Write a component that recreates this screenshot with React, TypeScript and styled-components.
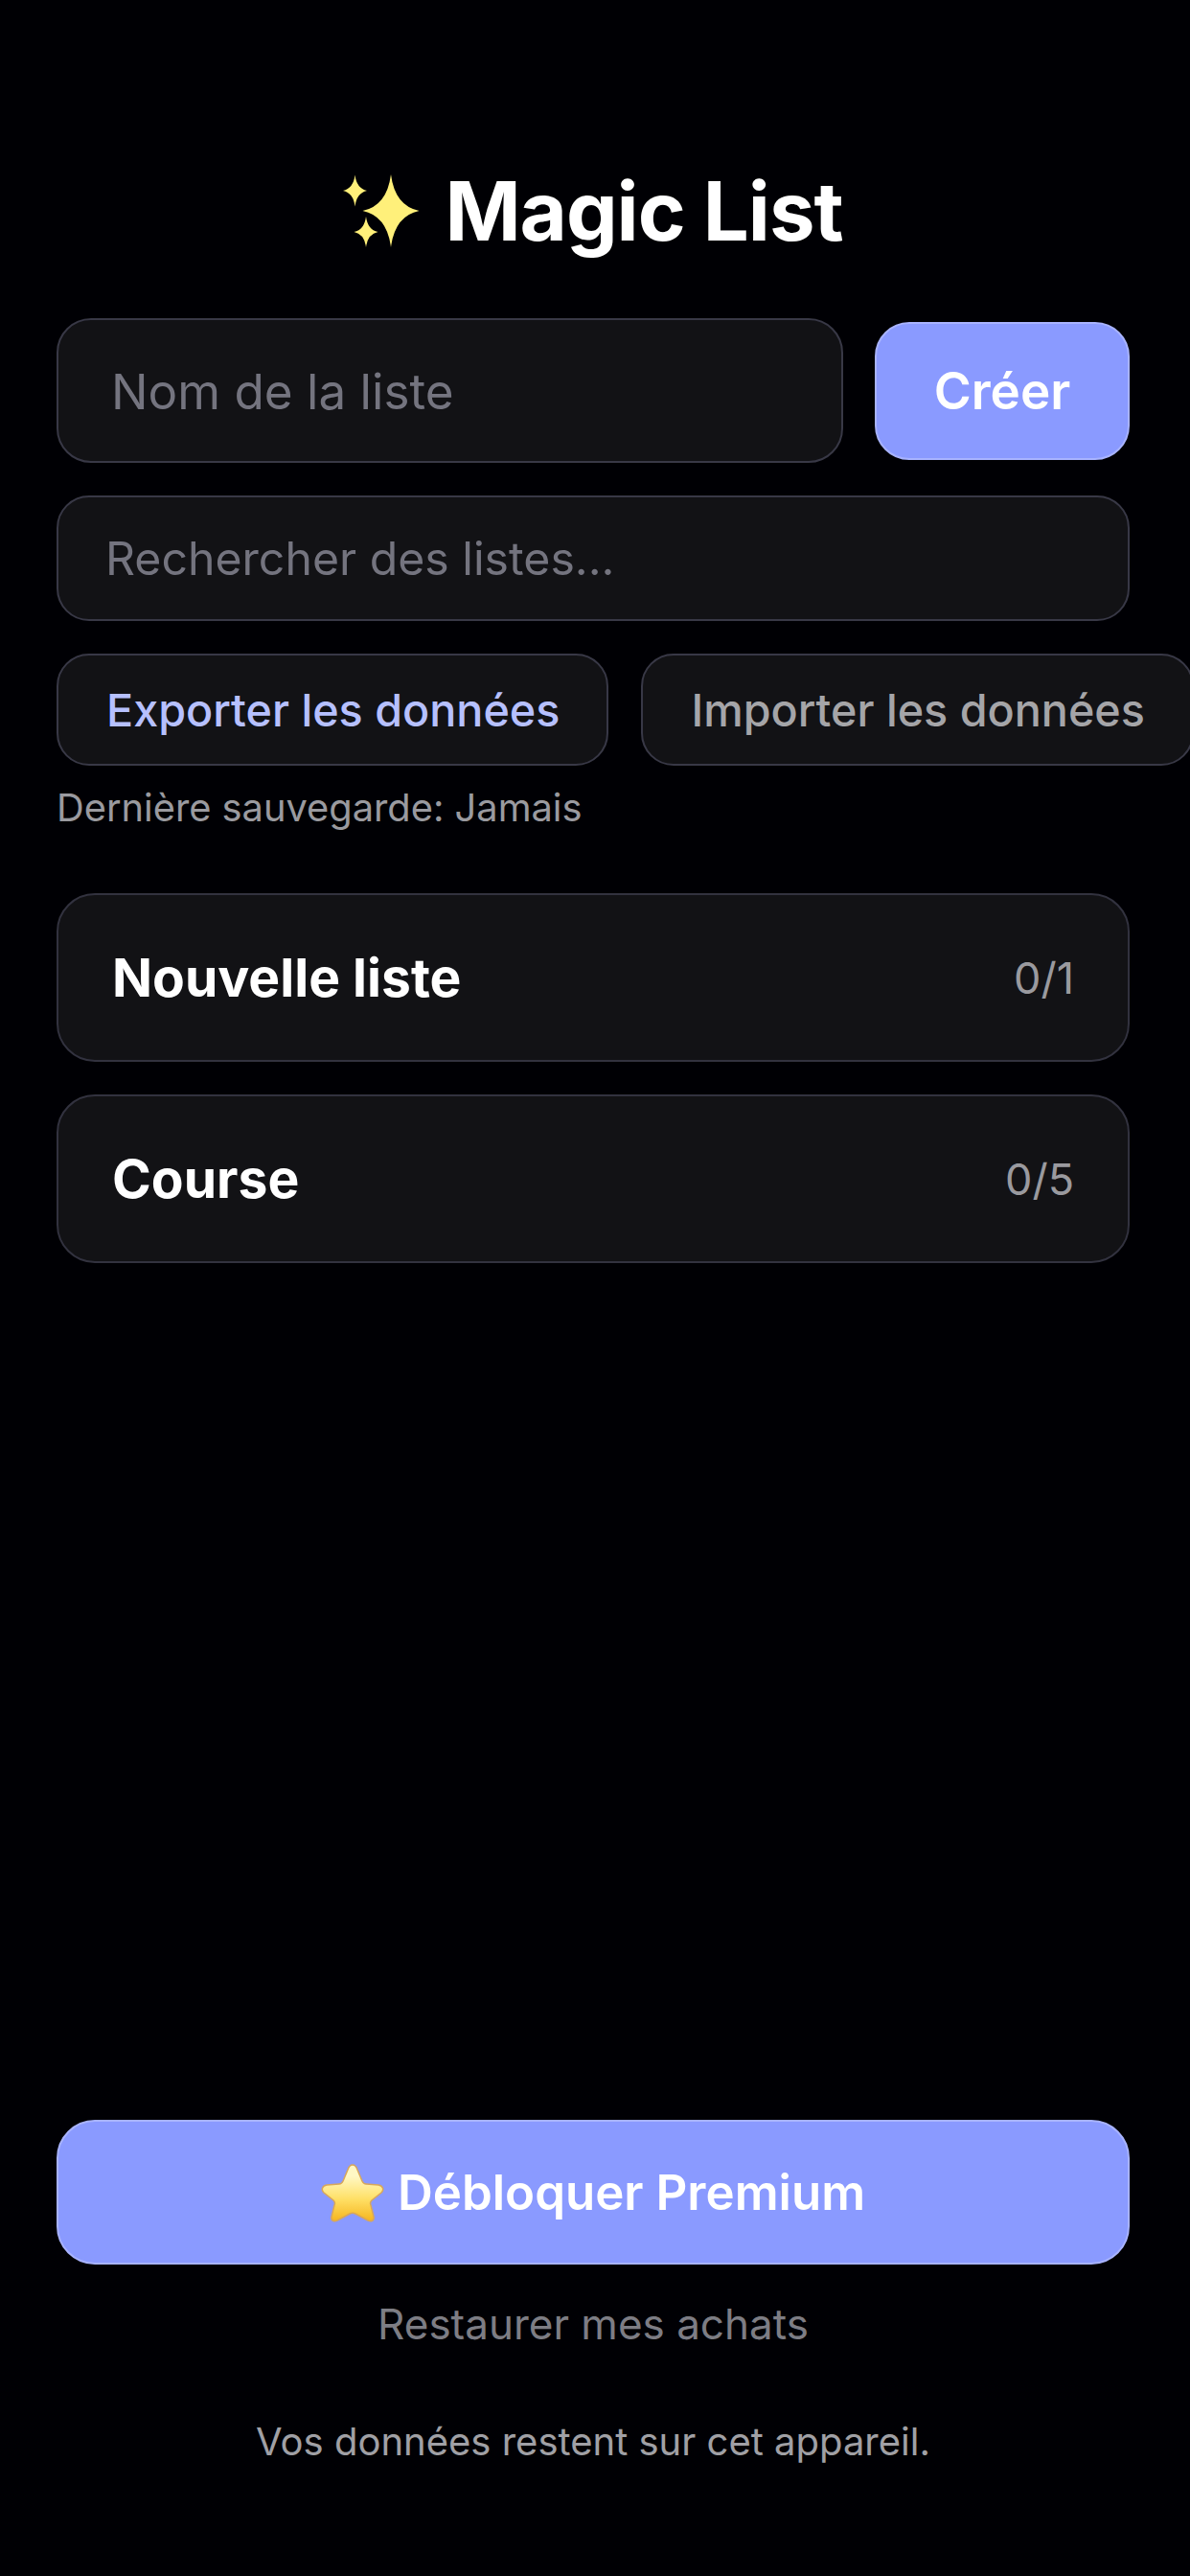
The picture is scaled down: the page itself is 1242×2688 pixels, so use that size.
import React from 'react';
import styled, { createGlobalStyle } from 'styled-components';

const GlobalStyle = createGlobalStyle`
  html, body {
    margin: 0;
    background: #000004;
    overflow: hidden;
  }
  * {
    box-sizing: border-box;
  }
`;

const Screen = styled.div`
  display: flex;
  flex-direction: column;
  width: 1242px;
  height: 2688px;
  padding: 0 63px 0 59px;
  overflow: hidden;
  background: #000004;
  color: #fff;
  font-family: Inter, 'Liberation Sans', sans-serif;
`;

const Title = styled.h1`
  display: flex;
  align-items: center;
  justify-content: center;
  gap: 26px;
  height: 100px;
  margin: 170px 0 62px;
  font-size: 85px;
  font-weight: 700;
  letter-spacing: -1px;
`;

const CreateRow = styled.div`
  display: flex;
  align-items: center;
  gap: 33px;
  height: 151px;
`;

const NameInput = styled.input`
  flex: 1;
  min-width: 0;
  height: 151px;
  padding: 0 55px;
  border: 2px solid #383846;
  border-radius: 36px;
  outline: 0;
  background: #121215;
  font: 400 51.2px Inter, sans-serif;
  &::placeholder {
    color: #74747f;
    opacity: 1;
  }
`;

const SearchInput = styled(NameInput)`
  flex: none;
  width: 100%;
  height: 131px;
  margin-top: 34px;
  padding: 0 49px;
  border-radius: 34px;
  font-size: 48.2px;
`;

const PrimaryButton = styled.button`
  border: 2px solid #a8b3ff;
  background: #8a9aff;
  color: #fff;
  font-family: inherit;
`;

const CreateButton = styled(PrimaryButton)`
  width: 266px;
  height: 144px;
  border-radius: 36px;
  font-size: 53px;
  font-weight: 600;
`;

const DataActions = styled.div`
  display: flex;
  gap: 34px;
  margin-top: 34px;
`;

const DataButton = styled.button<{ $active?: boolean }>`
  flex: none;
  height: 117px;
  padding: 0 49px 0 50px;
  border: 2px solid #383846;
  border-radius: 34px;
  background: #121215;
  color: ${({ $active }) => ($active ? '#b6c0ff' : '#a5a5a8')};
  font-family: inherit;
  font-size: 46.7px;
  font-weight: 500;
  white-space: nowrap;
`;

const LastSave = styled.div`
  margin-top: 20px;
  color: #9a9a9f;
  font-size: 39.8px;
  line-height: 48px;
`;

const Lists = styled.div`
  display: flex;
  flex-direction: column;
  gap: 34px;
  margin-top: 65px;
`;

const ListCard = styled.div`
  display: flex;
  align-items: center;
  justify-content: space-between;
  height: 176px;
  padding: 0 56px;
  border: 2px solid #32323f;
  border-radius: 40px;
  background: #121215;
`;

const ListName = styled.span`
  font-size: 55.2px;
  font-weight: 700;
`;

const ListCount = styled.span`
  color: #9a9a9f;
  font-size: 45px;
`;

const Footer = styled.div`
  display: flex;
  flex-direction: column;
  align-items: center;
  margin-top: auto;
  padding-bottom: 115px;
`;

const PremiumButton = styled(PrimaryButton)`
  display: flex;
  align-items: center;
  justify-content: center;
  gap: 14px;
  width: 100%;
  height: 151px;
  border-radius: 40px;
  font-size: 51px;
  font-weight: 600;
`;

const Restore = styled.div`
  margin-top: 34px;
  color: #7d7d84;
  font-size: 44px;
  line-height: 56px;
`;

const Notice = styled.div`
  margin-top: 70px;
  color: #a0a0a5;
  font-size: 40px;
  line-height: 50px;
`;

function Sparkles(): JSX.Element {
  const star = (cx: number, cy: number, rx: number, ry: number) => {
    const kx = rx * 0.14;
    const ky = ry * 0.14;
    return `M${cx} ${cy - ry}Q${cx + kx} ${cy - ky} ${cx + rx} ${cy}Q${cx + kx} ${cy + ky} ${cx} ${cy + ry}Q${cx - kx} ${cy + ky} ${cx - rx} ${cy}Q${cx - kx} ${cy - ky} ${cx} ${cy - ry}Z`;
  };
  return (
    <svg width="80" height="76" viewBox="0 0 80 76">
      <path d={star(12.5, 17, 12.5, 16.5)} fill="#fff07a" />
      <path d={star(24, 60, 12.5, 16)} fill="#fff07a" />
      <path d={star(50, 38, 29.5, 38)} fill="#fff07a" />
    </svg>
  );
}

function Star(): JSX.Element {
  return (
    <svg width="66" height="62" viewBox="0 0 66 62">
      <defs>
        <linearGradient id="starFill" x1="0" y1="0" x2="0" y2="1">
          <stop offset="0.2" stopColor="#fff8c4" />
          <stop offset="0.6" stopColor="#ffe067" />
          <stop offset="1" stopColor="#f5b51e" />
        </linearGradient>
      </defs>
      <path
        d="M33 2C35 2 37 4 38 7L43 19C44 21 45 22 47 22L60 23C65 24 66 28 63 31L53 39C52 40 51 42 52 44L55 56C56 60 52 62 49 60L36 53C34 52 32 52 30 53L17 60C14 62 10 60 11 56L14 44C15 42 14 40 13 39L3 31C0 28 1 24 6 23L19 22C21 22 22 21 23 19L28 7C29 4 31 2 33 2Z"
        fill="url(#starFill)"
        stroke="#d8a75a"
        strokeWidth="1.5"
      />
    </svg>
  );
}

export default function App(): JSX.Element {
  return (
    <Screen>
      <GlobalStyle />
      <Title>
        <Sparkles />
        Magic List
      </Title>
      <CreateRow>
        <NameInput placeholder="Nom de la liste" />
        <CreateButton>Créer</CreateButton>
      </CreateRow>
      <SearchInput placeholder="Rechercher des listes..." />
      <DataActions>
        <DataButton $active>Exporter les données</DataButton>
        <DataButton>Importer les données</DataButton>
      </DataActions>
      <LastSave>Dernière sauvegarde: Jamais</LastSave>
      <Lists>
        <ListCard>
          <ListName>Nouvelle liste</ListName>
          <ListCount>0/1</ListCount>
        </ListCard>
        <ListCard>
          <ListName>Course</ListName>
          <ListCount>0/5</ListCount>
        </ListCard>
      </Lists>
      <Footer>
        <PremiumButton>
          <Star />
          Débloquer Premium
        </PremiumButton>
        <Restore>Restaurer mes achats</Restore>
        <Notice>Vos données restent sur cet appareil.</Notice>
      </Footer>
    </Screen>
  );
}
